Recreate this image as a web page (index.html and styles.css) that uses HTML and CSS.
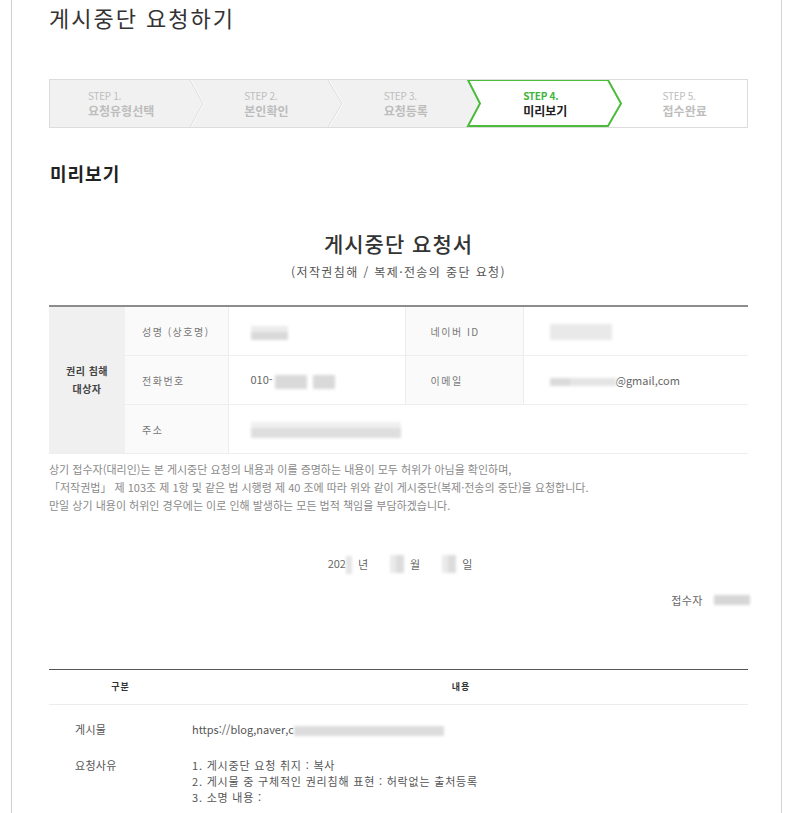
FILE: index.html
```html
<!DOCTYPE html>
<html lang="ko">
    <head>
        <meta charset="utf-8">
        <title>게시중단 요청하기</title>

        <link rel="stylesheet" href="styles.css">
    </head>

    <body>
        <div class="page">
            <h1 class="page-title">게시중단 요청하기</h1>

            <div class="steps">
                <svg class="steps-bg" width="697" height="47" viewBox="0 0 697 47">
                    <polygon points="0,0 418,0 430,23.5 418,47 0,47" fill="#f1f1f1"/>
                    <polyline points="140,0 153,23.5 140,47" fill="none" stroke="#dcdcdc"/>
                    <polyline points="141,0 154,23.5 141,47" fill="none" stroke="#fafafa"/>
                    <polyline points="278,0 292,23.5 278,47" fill="none" stroke="#dcdcdc"/>
                    <polyline points="279,0 293,23.5 279,47" fill="none" stroke="#fafafa"/>
                    <polygon points="418,0 558,0 571,23.5 558,46 418,46 430,23.5" fill="#fff" stroke="#4cbb3c" stroke-width="2"/>
                </svg>
                <div class="step step-first"><small>STEP 1.</small><span>요청유형선택</span></div>
                <div class="step"><small>STEP 2.</small><span>본인확인</span></div>
                <div class="step"><small>STEP 3.</small><span>요청등록</span></div>
                <div class="step active"><small>STEP 4.</small><span>미리보기</span></div>
                <div class="step"><small>STEP 5.</small><span>접수완료</span></div>
            </div>

            <h2 class="section-title">미리보기</h2>

            <div class="doc-head">
                <h3>게시중단 요청서</h3>
                <p>(저작권침해 / 복제·전송의 중단 요청)</p>
            </div>

            <table class="info">
                <colgroup>
                    <col class="c-target">
                    <col class="c-label">
                    <col class="c-value">
                    <col class="c-label2">
                    <col>
                </colgroup>
                <tr>
                    <th rowspan="3" class="target">권리 침해<br>대상자</th>
                    <th>성명 (상호명)</th>
                    <td><span class="blur blur-name"></span></td>
                    <th class="label2">네이버 ID</th>
                    <td class="value2"><span class="blur blur-id"></span></td>
                </tr>
                <tr>
                    <th>전화번호</th>
                    <td>010-<span class="blur blur-phone"></span><span class="blur blur-phone2"></span></td>
                    <th class="label2">이메일</th>
                    <td class="value2"><span class="blur blur-mail"></span>@gmail,com</td>
                </tr>
                <tr>
                    <th>주소</th>
                    <td colspan="3"><span class="blur blur-addr"></span></td>
                </tr>
            </table>

            <p class="notice">상기 접수자(대리인)는 본 게시중단 요청의 내용과 이를 증명하는 내용이 모두 허위가 아님을 확인하며,<br>「저작권법」 제 103조 제 1항 및 같은 법 시행령 제 40 조에 따라 위와 같이 게시중단(복제·전송의 중단)을 요청합니다.<br>만일 상기 내용이 허위인 경우에는 이로 인해 발생하는 모든 법적 책임을 부담하겠습니다.</p>

            <div class="date">
                <span>202<span class="blur blur-year"></span></span>
                <span class="unit">년</span>
                <span class="blur blur-day"></span>
                <span class="unit">월</span>
                <span class="blur blur-day"></span>
                <span class="unit">일</span>
            </div>

            <div class="sign">
                <span>접수자</span>
                <span class="blur blur-sign"></span>
            </div>

            <table class="detail">
                <colgroup>
                    <col class="c-kind">
                    <col>
                </colgroup>
                <thead>
                    <tr>
                        <th>구분</th>
                        <th class="head-content">내용</th>
                    </tr>
                </thead>
                <tbody>
                    <tr>
                        <td class="kind">게시물</td>
                        <td><span class="url">https://blog,naver,c</span><span class="blur blur-url"></span></td>
                    </tr>
                    <tr>
                        <td class="kind">요청사유</td>
                        <td>
                            1. 게시중단 요청 취지 : 복사<br>
                            2. 게시물 중 구체적인 권리침해 표현 : 허락없는 출처등록<br>
                            3. 소명 내용 :
                        </td>
                    </tr>
                </tbody>
            </table>
        </div>
    </body>
</html>
```

FILE: styles.css
```css
body {
    margin: 0;
    padding: 0;

    font-family: "Noto Sans CJK KR", "Noto Sans", sans-serif;
    color: #333;
    background-color: #fff;
}

.page {
    box-sizing: border-box;
    width: 771px;
    min-height: 813px;
    margin-left: 11px;
    padding: 2px 33px 0 37px;
    border-left: 1px solid #cfcfcf;
    border-right: 1px solid #d4d4d4;
}

.page-title {
    margin: 0;
    font-size: 22px;
    line-height: 30px;
    font-weight: 400;
    letter-spacing: 2px;
    color: #333;
}

/* step bar */

.steps {
    position: relative;
    display: flex;
    box-sizing: border-box;
    height: 49px;
    margin-top: 47px;
    border: 1px solid #dcdcdc;
}

.steps-bg {
    position: absolute;
    top: 0;
    left: 0;
}

.step {
    position: relative;
    display: flex;
    flex-direction: column;
    justify-content: center;
    box-sizing: border-box;
    width: 140px;
    padding-left: 55px;
}

.step.step-first {
    padding-left: 38px;
}

.step small {
    font-size: 10px;
    line-height: 14px;
    letter-spacing: -0.3px;
    color: #bdbdbd;
}

.step span {
    font-size: 12px;
    line-height: 15px;
    font-weight: 700;
    color: #bdbdbd;
}

.step.active small {
    font-weight: 700;
    color: #3db53a;
}

.step.active span {
    color: #222;
}

.section-title {
    margin: 32px 0 0 1px;
    font-size: 18px;
    line-height: 26px;
    font-weight: 700;
    letter-spacing: 1px;
    color: #222;
}

/* document */

.doc-head {
    text-align: center;
    margin-top: 42px;
}

.doc-head h3 {
    margin: 0;
    font-size: 21px;
    line-height: 30px;
    font-weight: 500;
    letter-spacing: 1px;
    color: #333;
}

.doc-head p {
    margin: 5px 0 0;
    font-size: 12px;
    line-height: 18px;
    letter-spacing: 1.4px;
    color: #555;
}

.info {
    width: 699px;
    margin-top: 24px;
    border-collapse: collapse;
    table-layout: fixed;
    border-top: 2px solid #8c8c8c;
}

.c-target {
    width: 76px;
}

.c-label {
    width: 103px;
}

.c-value {
    width: 177px;
}

.c-label2 {
    width: 118px;
}

.info th,
.info td {
    height: 48px;
    padding: 0 0 0 22px;
    text-align: left;
    font-size: 11px;
    font-weight: 400;
    color: #666;
    border-bottom: 1px solid #eeeeee;
    border-right: 1px solid #ececec;
    white-space: nowrap;
}

.info th {
    padding-left: 17px;
    font-size: 10px;
    letter-spacing: 1.5px;
    color: #777;
    background-color: #fafafa;
}

.info th.label2 {
    padding-left: 25px;
}

.info td.value2 {
    padding-left: 26px;
    border-right: 0;
}

.info tr:last-child td {
    border-right: 0;
}

.info th.target {
    padding: 0;
    text-align: center;
    font-weight: 700;
    line-height: 18px;
    letter-spacing: 0.5px;
    color: #444;
    background-color: #f0f0f0;
    border-right: 0;
}

.blur {
    display: inline-block;
    vertical-align: middle;
    height: 14px;
    background-color: #dedede;
    filter: blur(1.5px);
}

.blur-name {
    width: 37px;
    background: linear-gradient(#ececec 0 45%, #d9d9d9 45%);
}

.blur-id {
    width: 62px;
    height: 16px;
    background-color: #e9e9e9;
}

.blur-phone {
    width: 32px;
    margin-left: 2px;
    background-color: #d9d9d9;
}

.blur-phone2 {
    width: 22px;
    margin-left: 6px;
    background-color: #d9d9d9;
}

.blur-mail {
    width: 66px;
    height: 8px;
    background: linear-gradient(90deg, #dadada 0 30%, #e4e4e4 30%);
}

.blur-addr {
    width: 150px;
    height: 16px;
    background: linear-gradient(#f0f0f0 0 40%, #dedede 40%);
}

.notice {
    margin: 6px 0 0;
    font-size: 11px;
    line-height: 18px;
    color: #8a8a8a;
}

.date {
    display: flex;
    justify-content: center;
    align-items: center;
    margin-top: 40px;
    padding-left: 3px;
    font-size: 11px;
    line-height: 18px;
    color: #666;
}

.date .unit {
    margin-left: 6px;
}

.blur-year {
    width: 6px;
    height: 18px;
    background-color: #e4e4e4;
}

.blur-day {
    width: 14px;
    height: 18px;
    margin-left: 22px;
    background: linear-gradient(90deg, #eaeaea 0 40%, #dcdcdc 40%);
}

.sign {
    display: flex;
    justify-content: flex-end;
    align-items: center;
    gap: 11px;
    margin: 17px -2px 0 0;
    font-size: 11px;
    line-height: 18px;
    letter-spacing: 0.5px;
    color: #666;
}

.blur-sign {
    width: 36px;
    height: 10px;
    background-color: #d6d6d6;
}

.detail {
    width: 699px;
    margin-top: 60px;
    border-collapse: collapse;
    table-layout: fixed;
    border-top: 1px solid #555;
}

.c-kind {
    width: 143px;
}

.detail thead th {
    height: 32px;
    padding: 0 0 2px;
    font-size: 9px;
    font-weight: 700;
    letter-spacing: 1px;
    color: #333;
    border-bottom: 1px solid #ececec;
}

.detail thead th.head-content {
    padding-right: 18px;
}

.detail tbody td {
    padding: 16px 0 4px;
    vertical-align: top;
    font-size: 11px;
    line-height: 16px;
    letter-spacing: 0.8px;
    color: #555;
}

.detail td.kind {
    padding-left: 26px;
    letter-spacing: 0.3px;
}

.detail .url {
    letter-spacing: 0;
}

.blur-url {
    width: 150px;
    height: 10px;
    background-color: #dcdcdc;
}
```
